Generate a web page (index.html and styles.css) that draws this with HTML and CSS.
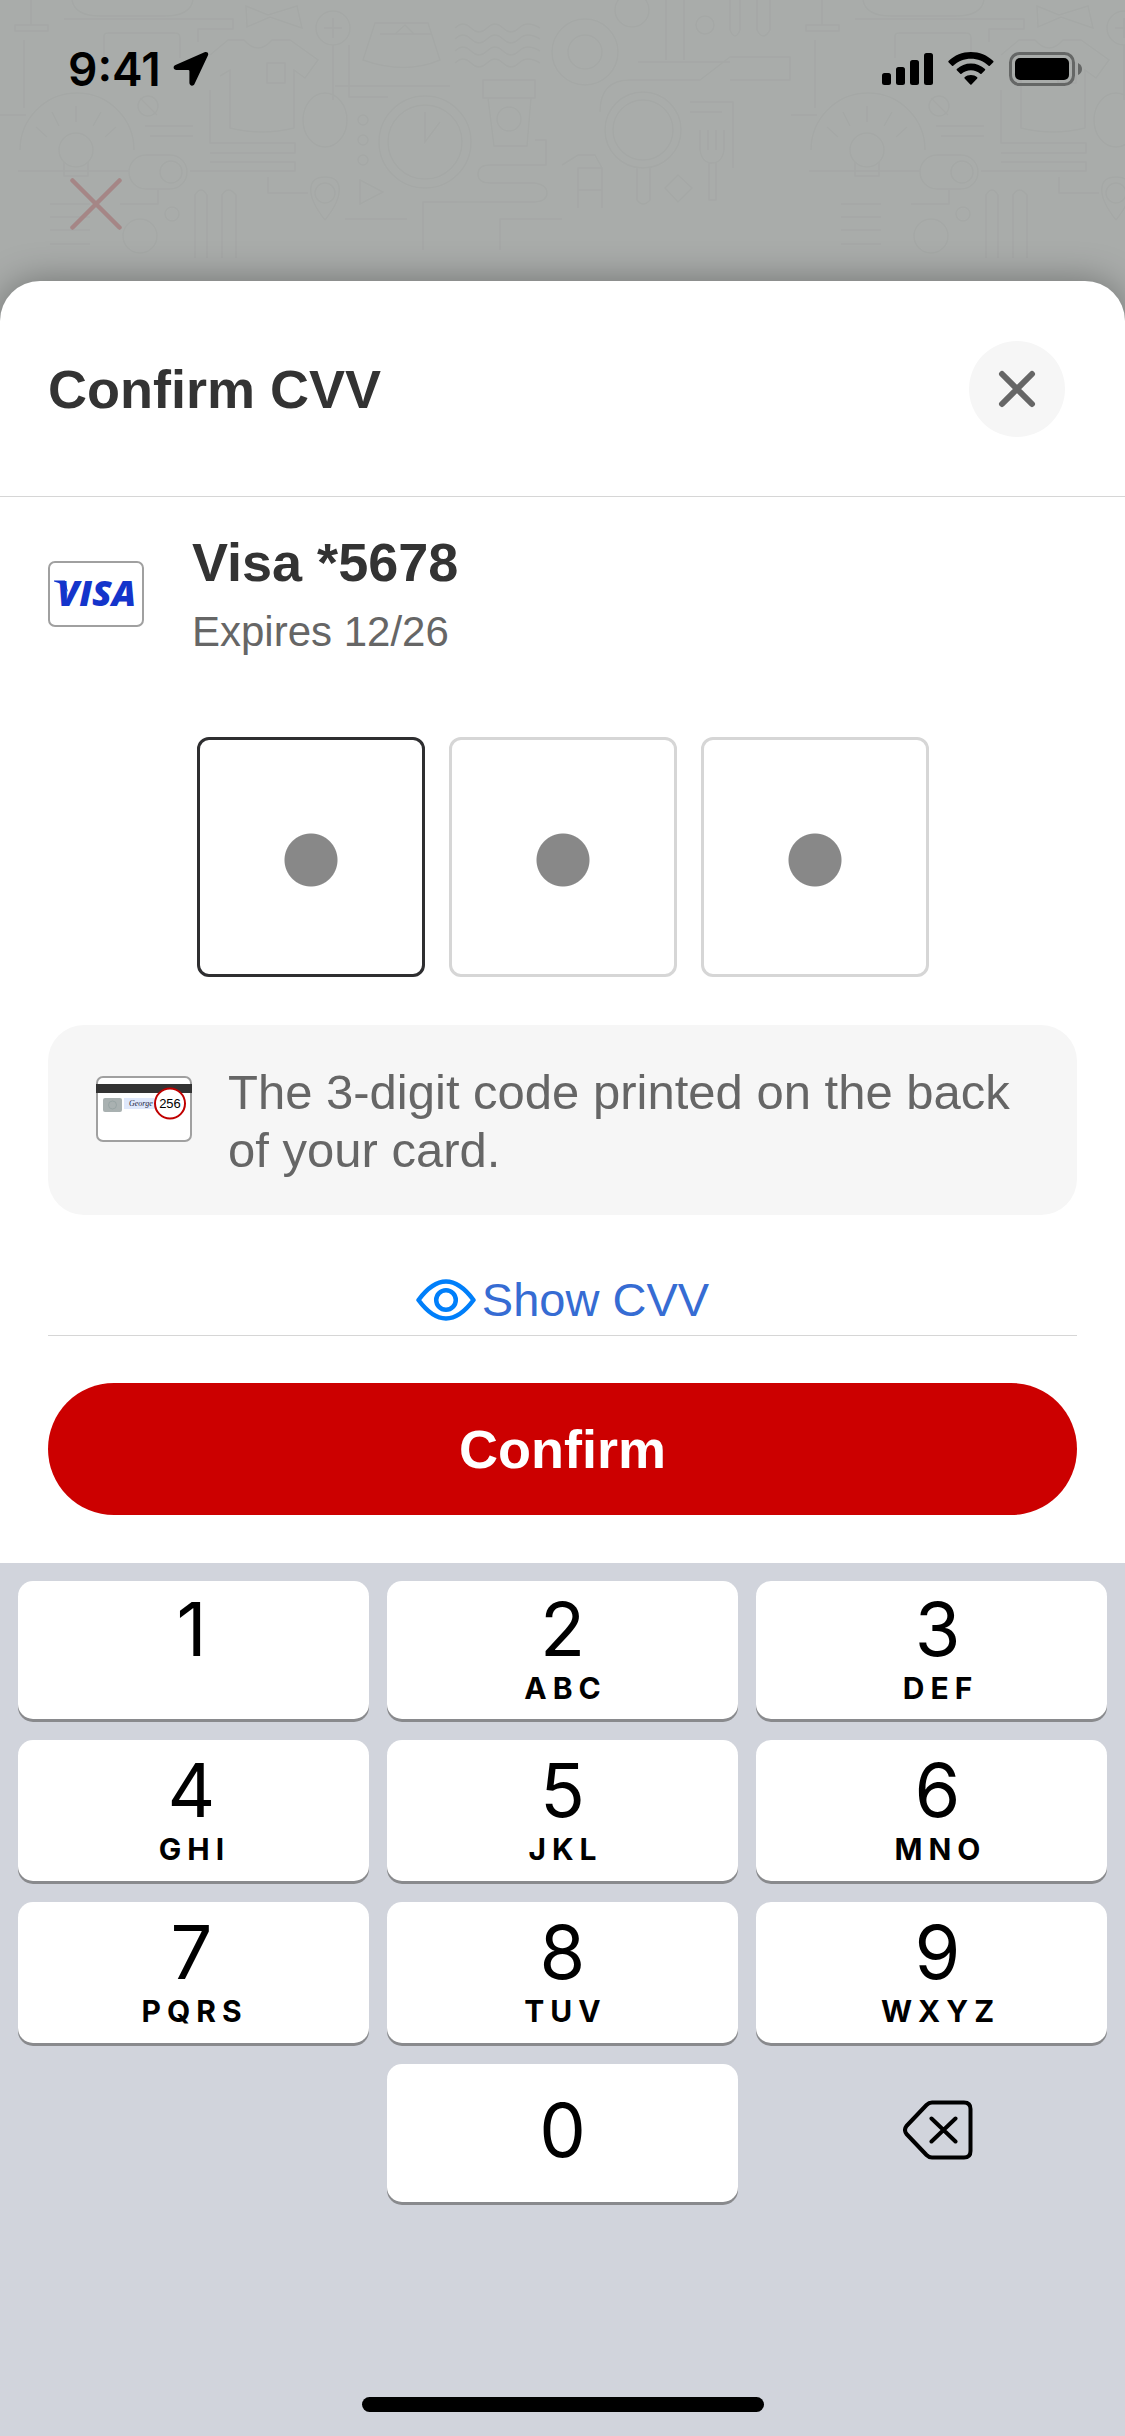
FILE: index.html
```html
<!DOCTYPE html>
<html lang="en">
<head>
<meta charset="utf-8">
<meta name="viewport" content="width=device-width, initial-scale=1">
<title>Confirm CVV</title>
<link rel="stylesheet" href="styles.css">
</head>
<body>
<header class="backdrop">
  <svg class="backdrop-art" aria-hidden="true">
    <defs>
      <pattern id="doodles" width="791" height="281" patternUnits="userSpaceOnUse">
        <g fill="none" stroke="#a5a8a6" stroke-width="1.5">
          <path d="M31 0V25M15 25H48V31H15ZM72 0Q75 16 100 16H165Q190 16 193 0M64 19H233V29H198V42M104 58V36Q104 33 108 33H175Q180 33 180 38V58"/>
          <path d="M246 6L268 15L297 6L302 28L270 17L247 27ZM24 40V108M0 115H26"/>
          <circle cx="333" cy="28" r="17"/><path d="M333 18V38M324 28H342M333 45V100M335 86H450M349 45V97H388"/>
          <path d="M375 23H428L440 60Q405 75 363 60ZM380 34H432M395 34L405 25L414 34"/>
          <path d="M455 28Q463 20 471 28T487 28T503 28T519 28T540 28M455 39Q463 31 471 39T487 39T503 39T519 39T540 39M455 51Q463 43 471 51T487 51T503 51T519 51T540 51M455 63Q463 55 471 63T487 63T503 63T519 63T540 63"/>
          <path d="M210 55L228 40H244Q258 56 272 40H290L318 60L305 78L294 70V128Q262 136 230 128V70L220 76M267 63H285V83H267ZM210 90V143H295V153H210M210 162H295V171H190"/>
          <circle cx="76" cy="150" r="17"/><path d="M64 162V176H88V162M76 122V106M59 126L52 112M93 126L101 112M47 137L36 127M105 137L116 127M18 171H130M20 150A57 57 0 0 1 134 150"/>
          <rect x="129" y="155" width="58" height="34" rx="17"/><circle cx="171" cy="172" r="11"/>
          <circle cx="148" cy="106" r="10"/><path d="M140 98L157 115M145 126H193M150 136H193"/>
          <ellipse cx="325" cy="120" rx="22" ry="27"/><circle cx="363" cy="120" r="5"/><circle cx="363" cy="140" r="5"/><circle cx="363" cy="160" r="5"/>
          <circle cx="425" cy="142" r="46"/><circle cx="425" cy="142" r="37"/><path d="M425 112V142L440 122"/>
          <path d="M483 80H535V98H483ZM488 98L494 146H527L531 98M535 140H546V165H490Q478 165 478 174T490 183H535Q547 185 547 193T535 202H457"/><circle cx="509" cy="119" r="12"/>
          <circle cx="325" cy="193" r="10"/><path d="M325 220C305 195 307 177 325 177S345 195 325 220M360 180L383 192L360 204ZM268 177V193H308M345 219H407M423 250V202H480M500 250V219H562"/>
          <path d="M50 204H90M50 217H90M50 230H90M50 244H90M195 258V195Q201 185 207 195V258M222 258V195Q228 185 236 195V258M158 190V204H120"/><circle cx="140" cy="236" r="17"/><circle cx="172" cy="214" r="7"/>
          <circle cx="585" cy="52" r="33"/><circle cx="585" cy="52" r="17"/><circle cx="632" cy="10" r="17"/><circle cx="705" cy="25" r="9"/>
          <path d="M666 0V60M684 0V60M730 0V30Q735 42 740 30V0M757 0V30Q763 42 770 30V0M638 62H730M600 112Q600 80 630 80H700L730 57H790V80H730"/>
          <circle cx="643" cy="130" r="38"/><circle cx="643" cy="130" r="30"/><path d="M637 168V200Q643 208 650 200V168M700 130V150Q702 163 712 163T724 150V130M708 130V150M716 130V150M709 163V200H716V163M665 188L678 175L692 188L678 202ZM578 208V168H602V208M562 165L578 155H595L602 168M578 190H602M690 102H733V168M690 112H722"/>
        </g>
      </pattern>
    </defs>
    <rect width="100%" height="100%" fill="url(#doodles)"/>
  </svg>
  <div class="status-bar">
    <span class="status-time">9:41</span>
    <svg class="status-location" width="36" height="36" viewBox="0 0 36 36" aria-hidden="true"><path d="M31.500 1.300C34 0.200 36 2 34.900 4.600L21.500 33C20.300 35.600 16.400 35 16.400 31.800V20.200Q16.400 19 15.200 19H3.600C0.300 19 -0.500 15.200 2.500 13.900Z"/></svg>
    <div class="status-icons">
      <svg width="51" height="34" viewBox="0 0 51 34" aria-hidden="true"><rect y="21" width="9" height="12" rx="2.500"/><rect x="14" y="15" width="9" height="18" rx="2.500"/><rect x="28" y="8" width="9" height="25" rx="2.500"/><rect x="42" y="1" width="9" height="32" rx="2.500"/></svg>
      <svg width="46" height="34" viewBox="0 0 46 34" aria-hidden="true"><path d="M22.900 0C14.500 0 6.500 3.200 0.500 9Q0 9.600 0.500 10.200L4 13.700Q4.600 14.200 5.200 13.700C10 9.200 16.200 6.700 22.900 6.700S35.800 9.200 40.600 13.700Q41.200 14.200 41.800 13.700L45.300 10.200Q45.800 9.600 45.300 9C39.300 3.200 31.300 0 22.900 0ZM22.900 11.500C17.600 11.500 12.600 13.500 8.800 17.100Q8.300 17.700 8.800 18.300L12.300 21.800Q12.900 22.300 13.500 21.800C16.100 19.500 19.400 18.200 22.900 18.200S29.700 19.500 32.300 21.800Q32.900 22.300 33.500 21.800L37 18.300Q37.500 17.700 37 17.100C33.200 13.500 28.200 11.500 22.900 11.500ZM22.900 23C20.500 23 18.300 23.800 16.600 25.300Q16.100 25.900 16.600 26.500L22.300 32.400Q22.900 33 23.500 32.400L29.200 26.500Q29.700 25.900 29.200 25.300C27.500 23.800 25.300 23 22.900 23Z"/></svg>
      <svg width="74" height="34" viewBox="0 0 74 34" aria-hidden="true"><rect x="1.500" y="1.500" width="63" height="31" rx="9" fill="none" stroke="#656766" stroke-width="3"/><rect x="6" y="6" width="54" height="22" rx="5"/><path fill="#656766" d="M69 11Q73 13 73 17T69 23Z"/></svg>
    </div>
  </div>
  <button class="page-close" type="button" aria-label="Close page">
    <svg width="52" height="52" viewBox="0 0 52 52" fill="none" stroke="#a58686" stroke-width="4.500" stroke-linecap="round" aria-hidden="true"><path d="M2.500 2.500L49.500 49.500M49.500 2.500L2.500 49.500"/></svg>
  </button>
</header>

<main class="sheet">
  <div class="sheet-header">
    <h1 class="heading">Confirm CVV</h1>
    <button class="sheet-close" type="button" aria-label="Close">
      <svg width="38" height="38" viewBox="0 0 38 38" fill="none" stroke="#666" stroke-width="6" stroke-linecap="round" aria-hidden="true"><path d="M4 4L34 34M34 4L4 34"/></svg>
    </button>
  </div>

  <form class="sheet-body">
    <div class="card-row">
      <svg width="96" height="66" viewBox="0 0 96 66" role="img" aria-label="Visa">
        <rect x="1" y="1" width="94" height="64" rx="6" fill="#fff" stroke="#a0a0a0" stroke-width="2"/>
        <path d="M6 19.500H17L20 31Q16 23 6 20.500Z" fill="#1434cb"/>
        <text class="visa-mark" x="9" y="45">VISA</text>
      </svg>
      <div class="card-info">
        <h2 class="heading">Visa *5678</h2>
        <p class="card-expiry">Expires 12/26</p>
      </div>
    </div>

    <div class="digits" role="group" aria-label="Security code">
      <input class="digit digit-active" type="password" maxlength="1" inputmode="numeric" aria-label="Digit 1">
      <input class="digit" type="password" maxlength="1" inputmode="numeric" aria-label="Digit 2">
      <input class="digit" type="password" maxlength="1" inputmode="numeric" aria-label="Digit 3">
    </div>

    <div class="hint">
      <svg class="hint-icon" width="96" height="66" viewBox="0 0 96 66" aria-hidden="true">
        <rect x="1" y="1" width="94" height="64" rx="6" fill="#fff" stroke="#a0a0a0" stroke-width="2"/>
        <rect y="8" width="96" height="9" fill="#333"/>
        <rect x="7" y="22" width="19" height="14" rx="2" fill="#a9b1b1"/>
        <circle cx="16.500" cy="29" r="4" fill="none" stroke="#98a4a4"/>
        <rect x="28" y="22" width="32" height="11" fill="#dfe8fb"/>
        <text class="card-sign" x="33" y="30">George</text>
        <circle cx="74" cy="27.500" r="15" fill="#fff" stroke="#c00000" stroke-width="2"/>
        <text class="card-code" x="74" y="32">256</text>
      </svg>
      <p class="hint-text">The 3-digit code printed on the back of your card.</p>
    </div>

    <button class="show-cvv" type="button">
      <svg width="60" height="42" viewBox="0 0 60 42" fill="none" stroke="#007ffa" aria-hidden="true"><path d="M2.500 21C11 9.500 20 2.500 30 2.500S49 9.500 57.500 21C49 32.500 40 39.500 30 39.500S11 32.500 2.500 21Z" stroke-width="4.500" stroke-linejoin="round"/><circle cx="30" cy="21" r="9.800" stroke-width="4.500"/></svg>
      Show CVV
    </button>
    <hr class="rule">
    <button class="confirm" type="submit">Confirm</button>
  </form>
</main>

<section class="keyboard" aria-label="Number pad">
  <div class="keys">
    <button class="key" type="button"><span class="key-digit">1</span><span class="key-letters"></span></button>
    <button class="key" type="button"><span class="key-digit">2</span><span class="key-letters">ABC</span></button>
    <button class="key" type="button"><span class="key-digit">3</span><span class="key-letters">DEF</span></button>
    <button class="key" type="button"><span class="key-digit">4</span><span class="key-letters">GHI</span></button>
    <button class="key" type="button"><span class="key-digit">5</span><span class="key-letters">JKL</span></button>
    <button class="key" type="button"><span class="key-digit">6</span><span class="key-letters">MNO</span></button>
    <button class="key" type="button"><span class="key-digit">7</span><span class="key-letters">PQRS</span></button>
    <button class="key" type="button"><span class="key-digit">8</span><span class="key-letters">TUV</span></button>
    <button class="key" type="button"><span class="key-digit">9</span><span class="key-letters">WXYZ</span></button>
    <span></span>
    <button class="key key-single" type="button"><span class="key-digit">0</span></button>
    <button class="key key-single key-delete" type="button" aria-label="Delete">
      <svg width="70" height="60" viewBox="0 0 70 60" fill="none" stroke="#000" stroke-width="4" stroke-linecap="round" stroke-linejoin="round" aria-hidden="true"><path d="M29 2.500H61Q67.500 2.500 67.500 9V51Q67.500 57.500 61 57.500H29Q26 57.500 23.500 55L3.500 34Q0.500 30 3.500 26L23.500 5Q26 2.500 29 2.500ZM28.500 18.500L52.500 41.500M52.500 18.500L28.500 41.500"/></svg>
    </button>
  </div>
  <div class="home-indicator"></div>
</section>
</body>
</html>
```

FILE: styles.css
```css
* {
  box-sizing: border-box;
}

body {
  margin: 0;
  min-height: 100vh;
  display: flex;
  flex-direction: column;
  background: #a9acaa;
  color: #333;
  font-family: "Liberation Sans", Arial, sans-serif;
}

h1, h2, p {
  margin: 0;
}

button {
  margin: 0;
  padding: 0;
  border: 0;
  background: none;
  color: inherit;
  font-family: inherit;
}

svg {
  display: block;
  flex: none;
}

/* Dimmed page behind the sheet */
.backdrop {
  position: relative;
  padding: 42px 42px 51px 68px;
}

.backdrop-art {
  position: absolute;
  inset: 0;
  width: 100%;
  height: 100%;
}

.status-bar {
  position: relative;
  display: flex;
  align-items: center;
  height: 54px;
}

.status-time {
  color: #000;
  font: 600 46px/54px Inter, sans-serif;
}

.status-location {
  margin-left: 12px;
}

.status-icons {
  display: flex;
  gap: 15px;
  margin-left: auto;
}

.page-close {
  position: relative;
  display: block;
  margin: 82px 0 0 2px;
}

/* Sheet */
.sheet {
  position: relative;
  background: #fff;
  border-radius: 40px 40px 0 0;
  box-shadow: 0 0 36px rgba(0, 0, 0, 0.34);
}

.sheet-header {
  display: flex;
  align-items: center;
  justify-content: space-between;
  padding: 60px 60px 59px 48px;
  border-bottom: 1px solid #d6d6d6;
}

.heading {
  font-size: 54px;
  line-height: 64px;
  font-weight: 700;
}

.sheet-close {
  display: grid;
  place-items: center;
  width: 96px;
  height: 96px;
  border-radius: 50%;
  background: #f6f6f6;
}

.sheet-body {
  display: flex;
  flex-direction: column;
  padding: 33px 48px 48px;
}

.card-row {
  display: flex;
  align-items: center;
  gap: 48px;
}

.card-info {
  display: flex;
  flex-direction: column;
  gap: 13px;
}

.card-expiry {
  color: #666;
  font-size: 42px;
  line-height: 50px;
}

.visa-mark {
  fill: #1434cb;
  font: italic 800 36px "Open Sans", sans-serif;
}

.digits {
  display: flex;
  justify-content: center;
  gap: 24px;
  margin: 80px 0 48px;
}

.digit {
  width: 228px;
  height: 240px;
  border: 3px solid #d6d6d6;
  border-radius: 12px;
  outline: 0;
  background: radial-gradient(circle, #888 26px, transparent 27px) center 93px / 54px 54px no-repeat;
  color: transparent;
  text-align: center;
}

.digit-active {
  border-color: #2e2e30;
}

.hint {
  display: flex;
  align-items: flex-start;
  gap: 36px;
  padding: 38px 48px 36px;
  border-radius: 36px;
  background: #f6f6f6;
}

.hint-icon {
  margin-top: 13px;
}

.hint-text {
  color: #666;
  font-size: 49px;
  line-height: 58px;
}

.card-sign {
  fill: #1c2440;
  font: italic 8px "Liberation Serif", serif;
}

.card-code {
  fill: #000;
  font: 13px "Liberation Sans", sans-serif;
  text-anchor: middle;
}

.show-cvv {
  display: flex;
  align-items: center;
  align-self: center;
  gap: 6px;
  margin: 57px 0 7px;
  color: #366cd3;
  font-size: 47px;
  line-height: 56px;
}

.rule {
  width: 100%;
  height: 1px;
  margin: 0 0 47px;
  border: 0;
  background: #d6d6d6;
}

.confirm {
  height: 132px;
  border-radius: 66px;
  background: #c00;
  color: #fff;
  font-size: 54px;
  font-weight: 700;
}

/* Number pad */
.keyboard {
  flex: 1;
  display: flex;
  flex-direction: column;
  justify-content: space-between;
  position: relative;
  padding: 18px 18px 24px;
  background: #d1d4dc;
  font-family: Inter, sans-serif;
}

.keys {
  display: grid;
  grid-template-columns: repeat(3, 1fr);
  grid-template-rows: 138px 141px 141px 138px;
  gap: 21px 18px;
}

.key {
  display: flex;
  flex-direction: column;
  align-items: center;
  justify-content: center;
  gap: 14px;
  padding-top: 2px;
  border-radius: 15px;
  background: #fff;
  box-shadow: 0 3px 0 #898a8d;
  color: #000;
}

.key:nth-child(3n) {
  padding-left: 12px;
}

.key:nth-child(3n + 1) {
  padding-right: 4px;
}

.key-digit {
  font-size: 74px;
  line-height: 60px;
}

.key-letters {
  min-height: 30px;
  padding-left: 6px;
  font-size: 30px;
  line-height: 30px;
  font-weight: 700;
  letter-spacing: 6px;
}

.key-single {
  padding: 0 0 6px;
}

.key-delete {
  background: none;
  box-shadow: none;
}

.home-indicator {
  align-self: center;
  width: 402px;
  height: 15px;
  border-radius: 8px;
  background: #000;
}
```
